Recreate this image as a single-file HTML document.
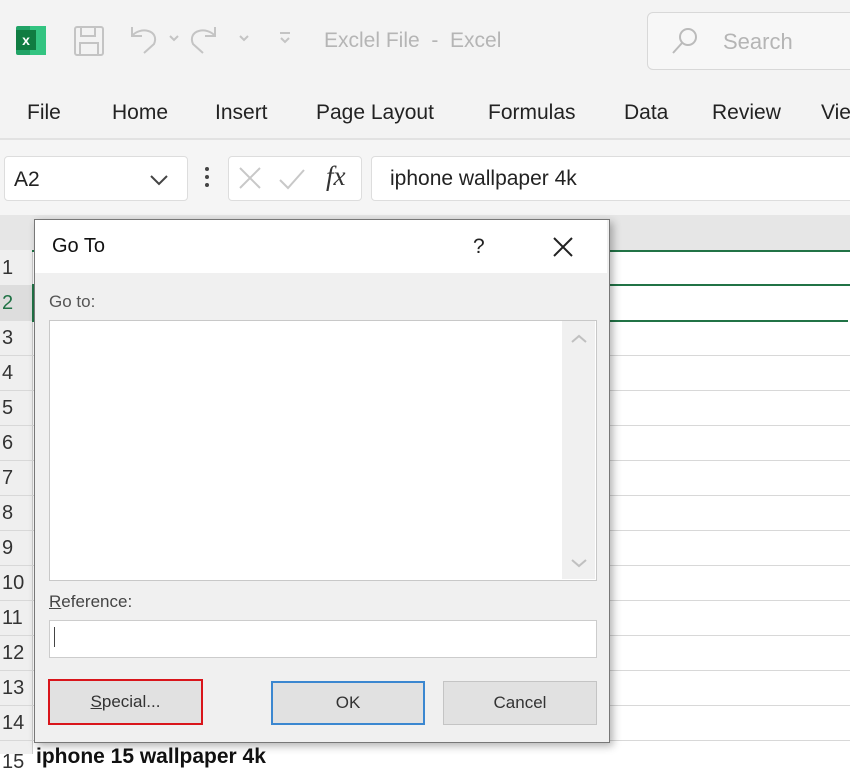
<!DOCTYPE html>
<html><head><style>
body{margin:0;width:850px;height:754px;overflow:hidden;background:#fff;font-family:"Liberation Sans",sans-serif;position:relative}
.a{position:absolute}
.t{color:#222;font-size:21px}
</style></head><body>
<div class="a" style="left:0;top:0;width:850px;height:140px;background:#f3f3f3"></div>
<div class="a" style="left:0;top:138px;width:850px;height:2px;background:#e2e2e2"></div>
<div class="a" style="left:0;top:140px;width:850px;height:75px;background:#f5f5f5"></div>
<div class="a" style="left:16px;top:26px;width:30px;height:29px;background:#21a366;border-radius:2px"></div>
<div class="a" style="left:30px;top:26px;width:16px;height:29px;background:#33c481"></div>
<div class="a" style="left:16px;top:30px;width:20px;height:20px;background:#107c41;color:#fff;font-size:14px;font-weight:bold;text-align:center;line-height:20px">x</div>
<svg class="a" style="left:70px;top:22px" width="240" height="36" fill="none" stroke="#c4c4c4" stroke-width="2">
<rect x="5" y="5" width="28" height="28" rx="2"/><rect x="11" y="5" width="14" height="9"/><rect x="10" y="21" width="18" height="12"/>
<path d="M62 5 L62 14 L72 14 M62 14 C70 4 90 8 84 22 L74 31"/>
<path d="M100 14 l4 4 l4 -4"/>
<path d="M145 5 L145 14 L135 14 M145 14 C137 4 117 8 123 22 L133 31"/>
<path d="M170 14 l4 4 l4 -4"/>
<path d="M210 11 h10 M211 16 l4 4 l4 -4"/>
</svg>
<div class="a" style="left:324px;top:29px;font-size:21px;color:#b5b5b5">Exclel File &nbsp;- &nbsp;Excel</div>
<div class="a" style="left:647px;top:12px;width:220px;height:56px;border:1px solid #d8d8d8;border-radius:6px;background:#f7f7f7"></div>
<svg class="a" style="left:670px;top:26px" width="30" height="30" fill="none" stroke="#bbb" stroke-width="2"><circle cx="18" cy="11" r="8"/><path d="M12 17 L3 27"/></svg>
<div class="a" style="left:723px;top:29px;font-size:22px;color:#b5b5b5">Search</div>
<div class="a t" style="left:27px;top:101px">File</div>
<div class="a t" style="left:112px;top:101px">Home</div>
<div class="a t" style="left:215px;top:101px">Insert</div>
<div class="a t" style="left:316px;top:101px">Page Layout</div>
<div class="a t" style="left:488px;top:101px">Formulas</div>
<div class="a t" style="left:624px;top:101px">Data</div>
<div class="a t" style="left:712px;top:101px">Review</div>
<div class="a t" style="left:821px;top:101px">View</div>
<div class="a" style="left:4px;top:156px;width:182px;height:43px;background:#fff;border:1px solid #ddd;border-radius:4px"></div>
<div class="a" style="left:14px;top:168px;font-size:21px;color:#222">A2</div>
<svg class="a" style="left:148px;top:172px" width="24" height="16" fill="none" stroke="#444" stroke-width="2"><path d="M3 4 l8 8 l8 -8"/></svg>
<div class="a" style="left:205px;top:167px;width:4px;height:4px;background:#444;border-radius:2px;box-shadow:0 8px 0 #444,0 16px 0 #444"></div>
<div class="a" style="left:228px;top:156px;width:132px;height:43px;background:#fff;border:1px solid #ddd;border-radius:4px"></div>
<svg class="a" style="left:236px;top:164px" width="80" height="30" fill="none" stroke="#c8c8c8" stroke-width="2"><path d="M4 4 l20 20 M24 4 l-20 20 M44 16 l8 8 l16 -18"/></svg>
<div class="a" style="left:326px;top:161px;font-family:'Liberation Serif',serif;font-style:italic;font-size:27px;color:#333">fx</div>
<div class="a" style="left:371px;top:156px;width:490px;height:43px;background:#fff;border:1px solid #ddd;border-radius:4px"></div>
<div class="a" style="left:390px;top:167px;font-size:21px;color:#222">iphone wallpaper 4k</div>
<div class="a" style="left:0;top:215px;width:850px;height:35px;background:#e6e6e6"></div>
<div class="a" style="left:0;top:250px;width:32px;height:504px;background:#efefef;border-right:1px solid #ccc"></div>
<div class="a" style="left:32px;top:250px;width:818px;height:2px;background:#217346"></div>
<div class="a" style="left:32px;top:284px;width:818px;height:2px;background:#217346"></div>
<div class="a" style="left:32px;top:320px;width:816px;height:2px;background:#217346"></div>
<div class="a" style="left:32px;top:285px;width:3px;height:36px;background:#217346"></div>
<div class="a" style="left:0;top:285px;width:32px;height:36px;background:#ddd"></div>
<div id="rows"></div>
<script>
var h='';for(var i=1;i<=15;i++){var y=250+(i-1)*35;h+='<div class="a" style="left:2px;top:'+(y+7+(i==15?4:0))+'px;font-size:20px;color:'+(i==2?'#217346':'#333')+'">'+i+'</div>';if(i>2&&i<15)h+='<div class="a" style="left:0;top:'+(y+35)+'px;width:850px;height:1px;background:#d8d8d8"></div>';}
document.getElementById('rows').innerHTML=h;
</script>
<div class="a" style="left:36px;top:745px;font-size:21px;font-weight:bold;color:#111">iphone 15 wallpaper 4k</div>
<div class="a" style="left:34px;top:219px;width:574px;height:522px;background:#f0f0f0;border:1px solid #777;box-shadow:3px 3px 8px rgba(0,0,0,.3)"></div>
<div class="a" style="left:35px;top:220px;width:572px;height:53px;background:#fff"></div>
<div class="a" style="left:52px;top:235px;font-size:20px;color:#111">Go To</div>
<div class="a" style="left:473px;top:235px;font-size:21px;color:#222">?</div>
<svg class="a" style="left:552px;top:236px" width="22" height="22" stroke="#222" stroke-width="2"><path d="M2 2 L20 20 M20 2 L2 20"/></svg>
<div class="a" style="left:49px;top:292px;font-size:17px;color:#555">Go to:</div>
<div class="a" style="left:49px;top:320px;width:546px;height:259px;background:#fff;border:1px solid #c8c8c8"></div>
<div class="a" style="left:562px;top:321px;width:33px;height:258px;background:#f0f0f0"></div>
<svg class="a" style="left:568px;top:330px" width="22" height="250" fill="none" stroke="#c0c0c0" stroke-width="2"><path d="M4 12 l7 -6 l7 6 M4 230 l7 6 l7 -6"/></svg>
<div class="a" style="left:49px;top:592px;font-size:17px;color:#444"><u>R</u>eference:</div>
<div class="a" style="left:49px;top:620px;width:546px;height:36px;background:#fff;border:1px solid #ccc"></div>
<div class="a" style="left:54px;top:627px;width:1px;height:20px;background:#444"></div>
<div class="a" style="left:48px;top:679px;width:151px;height:42px;background:#e1e1e1;border:2px solid #d9151b;text-align:center;line-height:42px;font-size:17px;color:#333"><u>S</u>pecial...</div>
<div class="a" style="left:271px;top:681px;width:150px;height:40px;background:#e1e1e1;border:2px solid #3b87d0;text-align:center;line-height:40px;font-size:17px;color:#333">OK</div>
<div class="a" style="left:443px;top:681px;width:152px;height:42px;background:#e1e1e1;border:1px solid #c4c4c4;text-align:center;line-height:42px;font-size:17px;color:#333">Cancel</div>
</body></html>
